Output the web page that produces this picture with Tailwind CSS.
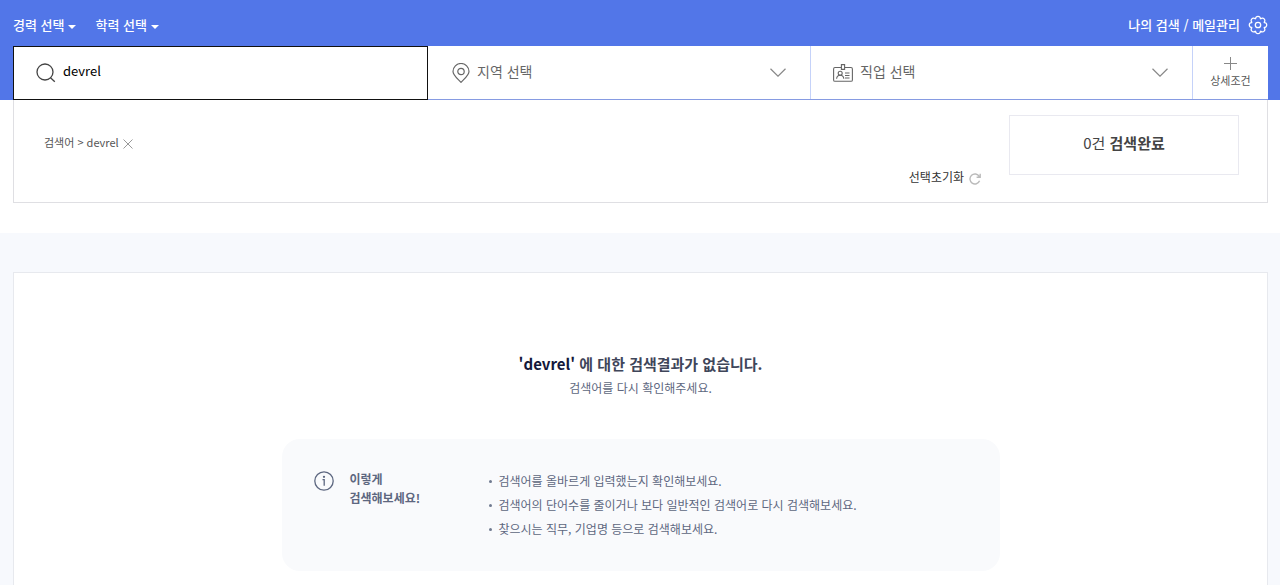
<!DOCTYPE html>
<html lang="ko">
<head>
  <meta charset="UTF-8">
  <meta name="viewport" content="width=device-width, initial-scale=1.0">
  <title>devrel 검색결과</title>
  <script src="https://cdn.jsdelivr.net/npm/@tailwindcss/browser@4"></script>
</head>
<body class="bg-[#f7f9fd] text-[#444] font-['Noto_Sans_CJK_KR',sans-serif]">
  <!-- 상단 검색 영역 -->
  <header class="bg-[#5276e8] pl-[13px] pr-3">
    <div class="flex h-[46px] items-center justify-between pt-1 text-[13px] font-medium text-white">
      <div class="flex gap-[19px]">
        <button type="button" class="flex items-center gap-1">경력 선택
          <svg class="mt-1 h-1 w-2" viewBox="0 0 8 4" fill="currentColor"><path d="M0 0h8L4 4z"/></svg>
        </button>
        <button type="button" class="flex items-center gap-1">학력 선택
          <svg class="mt-1 h-1 w-2" viewBox="0 0 8 4" fill="currentColor"><path d="M0 0h8L4 4z"/></svg>
        </button>
      </div>
      <a href="#" class="flex items-center gap-2">나의 검색 / 메일관리
        <svg class="size-5" viewBox="0 0 20 20" fill="none" stroke="currentColor" stroke-width="1.3">
          <path d="M7.59 4.18A2.45 2.45 0 1 1 12.41 4.18A2.45 2.45 0 1 1 15.82 7.59A2.45 2.45 0 1 1 15.82 12.41A2.45 2.45 0 1 1 12.41 15.82A2.45 2.45 0 1 1 7.59 15.82A2.45 2.45 0 1 1 4.18 12.41A2.45 2.45 0 1 1 4.18 7.59A2.45 2.45 0 1 1 7.59 4.18z"/>
          <circle cx="10" cy="10" r="2.7"/>
        </svg>
      </a>
    </div>

    <form class="grid h-[54px] grid-cols-[415fr_383fr_382fr_75px] border-b border-[#869be2] bg-white">
      <label class="relative -mb-px flex items-center border border-[#111] bg-white pl-[22px]">
        <svg class="size-5 shrink-0 text-[#444]" viewBox="0 0 20 20" fill="none" stroke="currentColor" stroke-width="1.3"><circle cx="9" cy="9" r="8"/><path d="M14.5 14.8l4.3 4"/></svg>
        <input type="text" value="devrel" aria-label="검색어" class="mb-1 ml-[7px] min-w-0 flex-1 text-[13px] text-black outline-none">
      </label>
      <button type="button" class="flex items-center border-r border-[#c5d2f9] pl-6 pr-6 text-sm text-[#666]">
        <svg class="h-5 w-[18px]" viewBox="0 0 18 20" fill="none" stroke="currentColor" stroke-width="1.2"><path d="M9 19.3C6 16 1 12.4 1 8.5a8 8 0 0 1 16 0C17 12.4 12 16 9 19.3z"/><circle cx="9" cy="8.5" r="3.2"/></svg>
        <span class="mb-1 ml-[7px]">지역 선택</span>
        <svg class="ml-auto h-[9px] w-4 text-[#888]" viewBox="0 0 16 9" fill="none" stroke="currentColor" stroke-width="1.2"><path d="M.5.8L8 8.2 15.5.8"/></svg>
      </button>
      <button type="button" class="flex items-center border-r border-[#c5d2f9] pl-[22px] pr-6 text-sm text-[#666]">
        <svg class="h-[18px] w-5" viewBox="0 0 20 18" fill="none" stroke="currentColor" stroke-width="1.1"><path d="M8.3 3.5H2A1.4 1.4 0 0 0 .6 4.9v11A1.4 1.4 0 0 0 2 17.3h16a1.4 1.4 0 0 0 1.4-1.4v-11A1.4 1.4 0 0 0 18 3.5h-6.3"/><path d="M8.4.6h3.2v4.8H8.4z"/><circle cx="7.2" cy="9.3" r="2"/><path d="M3.6 14.8c.2-2.2 1.6-3.5 3.6-3.5s3.4 1.3 3.6 3.5M12 9h4.5M12 11.5h4.5M12 14h4.5"/></svg>
        <span class="mb-1 ml-[7px]">직업 선택</span>
        <svg class="ml-auto h-[9px] w-4 text-[#888]" viewBox="0 0 16 9" fill="none" stroke="currentColor" stroke-width="1.2"><path d="M.5.8L8 8.2 15.5.8"/></svg>
      </button>
      <button type="button" class="flex flex-col items-center justify-center gap-[2px] text-[11px] leading-4 text-[#555]">
        <svg class="size-[13px] text-[#888]" viewBox="0 0 13 13" fill="none" stroke="currentColor"><path d="M6.5 0v13M0 6.5h13"/></svg>
        상세조건
      </button>
    </form>
  </header>

  <!-- 선택 조건 -->
  <section class="bg-white pb-[30px] pl-[13px] pr-3">
    <div class="flex h-[103px] border border-t-0 border-[#dfdfe3] pl-[30px] pr-7">
      <div class="mt-8 flex h-5 items-center gap-1 text-[11px] text-[#555]">
        <span>검색어 &gt; devrel</span>
        <button type="button" aria-label="삭제" class="mt-1">
          <svg class="size-[10px] text-[#999]" viewBox="0 0 10 10" fill="none" stroke="currentColor"><path d="M.5.5l9 9M9.5.5l-9 9"/></svg>
        </button>
      </div>
      <button type="button" class="ml-auto mt-[67px] flex h-5 items-center gap-[5px] text-xs text-[#333]">선택초기화
        <svg class="mt-1 size-3 text-[#bbb]" viewBox="0 0 12 12" fill="none" stroke="currentColor" stroke-width="1.4"><path d="M10.6 7.8A5 5 0 1 1 10.3 3.5M11.2.8v3.5H7.6"/></svg>
      </button>
      <button type="button" class="ml-7 mt-[15px] h-[60px] w-[230px] border border-[#e9e9f0] pb-1 text-[15px]">0건 <strong class="font-bold">검색완료</strong></button>
    </div>
  </section>

  <!-- 검색결과 없음 -->
  <main class="pl-[13px] pr-3 pt-[39px]">
    <div class="border border-[#e7e9ee] bg-white pb-10 pt-[79px]">
      <h1 class="text-center text-[15px] leading-6 font-bold text-[#3f465a]"><span class="text-[#14183a]">'devrel'</span> 에 대한 검색결과가 없습니다.</h1>
      <p class="text-center text-xs leading-6 text-[#5d6780]">검색어를 다시 확인해주세요.</p>
      <div class="mx-auto mt-[39px] flex max-w-[718px] rounded-[18px] bg-[#f9fafc] px-8 py-[30px] text-xs text-[#5d6780]">
        <svg class="mt-[2px] size-5 shrink-0" viewBox="0 0 20 20" fill="none" stroke="currentColor" stroke-width="1.3"><circle cx="10" cy="10" r="9.2"/><path d="M8.5 8.7h1.7v6"/><circle cx="10" cy="5.8" r=".5" fill="currentColor"/></svg>
        <h2 class="ml-4 w-[139px] font-bold leading-[19px]">이렇게<br>검색해보세요!</h2>
        <ul class="leading-6">
          <li class="flex items-center gap-[7px]"><i class="size-[3px] rounded-full bg-[#707a90]"></i>검색어를 올바르게 입력했는지 확인해보세요.</li>
          <li class="flex items-center gap-[7px]"><i class="size-[3px] rounded-full bg-[#707a90]"></i>검색어의 단어수를 줄이거나 보다 일반적인 검색어로 다시 검색해보세요.</li>
          <li class="flex items-center gap-[7px]"><i class="size-[3px] rounded-full bg-[#707a90]"></i>찾으시는 직무, 기업명 등으로 검색해보세요.</li>
        </ul>
      </div>
    </div>
  </main>
</body>
</html>
